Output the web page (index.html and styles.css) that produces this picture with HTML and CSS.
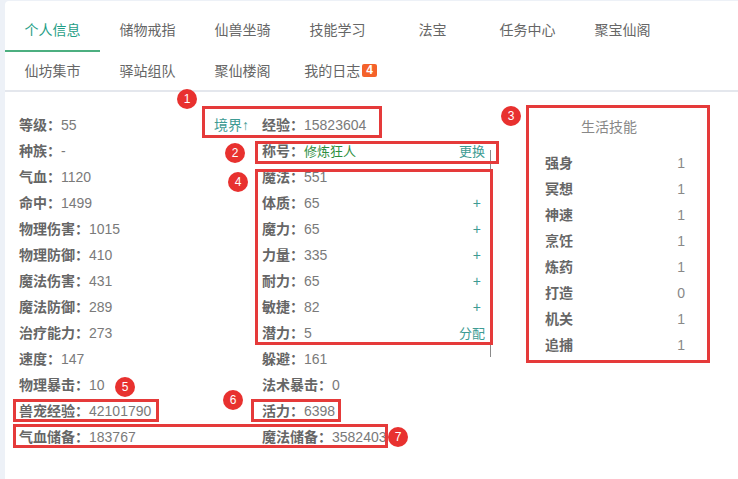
FILE: index.html
```html
<!DOCTYPE html>
<html lang="zh-CN">
<head>
<meta charset="utf-8">
<title>个人信息</title>
<link rel="stylesheet" href="styles.css">
</head>
<body>
<div class="page">
  <div class="card">
    <nav class="tabs">
      <div class="tab-row first">
        <div class="tab active">个人信息</div>
        <div class="tab">储物戒指</div>
        <div class="tab">仙兽坐骑</div>
        <div class="tab">技能学习</div>
        <div class="tab">法宝</div>
        <div class="tab">任务中心</div>
        <div class="tab">聚宝仙阁</div>
      </div>
      <div class="tab-row second">
        <div class="tab">仙坊集市</div>
        <div class="tab">驿站组队</div>
        <div class="tab">聚仙楼阁</div>
        <div class="tab with-badge">我的日志<span class="badge">4</span></div>
      </div>
    </nav>

    <div class="content">
      <div class="col col-left">
        <div class="row"><span class="lbl">等级：</span><span class="val">55</span><span class="link realm">境界↑</span></div>
        <div class="row"><span class="lbl">种族：</span><span class="val">-</span></div>
        <div class="row"><span class="lbl">气血：</span><span class="val">1120</span></div>
        <div class="row"><span class="lbl">命中：</span><span class="val">1499</span></div>
        <div class="row"><span class="lbl">物理伤害：</span><span class="val">1015</span></div>
        <div class="row"><span class="lbl">物理防御：</span><span class="val">410</span></div>
        <div class="row"><span class="lbl">魔法伤害：</span><span class="val">431</span></div>
        <div class="row"><span class="lbl">魔法防御：</span><span class="val">289</span></div>
        <div class="row"><span class="lbl">治疗能力：</span><span class="val">273</span></div>
        <div class="row"><span class="lbl">速度：</span><span class="val">147</span></div>
        <div class="row"><span class="lbl">物理暴击：</span><span class="val">10</span></div>
        <div class="row"><span class="lbl">兽宠经验：</span><span class="val">42101790</span></div>
        <div class="row"><span class="lbl">气血储备：</span><span class="val">183767</span></div>
      </div>

      <div class="col col-mid">
        <div class="row"><span class="lbl">经验：</span><span class="val">15823604</span></div>
        <div class="row"><span class="lbl">称号：</span><span class="title-val">修炼狂人</span><span class="link act small">更换</span></div>
        <div class="row"><span class="lbl">魔法：</span><span class="val">551</span></div>
        <div class="row"><span class="lbl">体质：</span><span class="val">65</span><span class="link act plus">+</span></div>
        <div class="row"><span class="lbl">魔力：</span><span class="val">65</span><span class="link act plus">+</span></div>
        <div class="row"><span class="lbl">力量：</span><span class="val">335</span><span class="link act plus">+</span></div>
        <div class="row"><span class="lbl">耐力：</span><span class="val">65</span><span class="link act plus">+</span></div>
        <div class="row"><span class="lbl">敏捷：</span><span class="val">82</span><span class="link act plus">+</span></div>
        <div class="row"><span class="lbl">潜力：</span><span class="val">5</span><span class="link act small">分配</span></div>
        <div class="row"><span class="lbl">躲避：</span><span class="val">161</span></div>
        <div class="row"><span class="lbl">法术暴击：</span><span class="val">0</span></div>
        <div class="row"><span class="lbl">活力：</span><span class="val">6398</span></div>
        <div class="row"><span class="lbl">魔法储备：</span><span class="val">3582403</span></div>
      </div>

      <div class="col col-right">
        <div class="skill-title">生活技能</div>
        <div class="skill-row"><span class="lbl">强身</span><span class="sval">1</span></div>
        <div class="skill-row"><span class="lbl">冥想</span><span class="sval">1</span></div>
        <div class="skill-row"><span class="lbl">神速</span><span class="sval">1</span></div>
        <div class="skill-row"><span class="lbl">烹饪</span><span class="sval">1</span></div>
        <div class="skill-row"><span class="lbl">炼药</span><span class="sval">1</span></div>
        <div class="skill-row"><span class="lbl">打造</span><span class="sval">0</span></div>
        <div class="skill-row"><span class="lbl">机关</span><span class="sval">1</span></div>
        <div class="skill-row"><span class="lbl">追捕</span><span class="sval">1</span></div>
      </div>
    </div>
  </div>

  <div class="mark m1"></div>
  <div class="mark m2"></div>
  <div class="mark m3"></div>
  <div class="mark m4"></div>
  <div class="mark m5"></div>
  <div class="mark m6"></div>
  <div class="mark m7"></div>

  <div class="dot d1">1</div>
  <div class="dot d2">2</div>
  <div class="dot d3">3</div>
  <div class="dot d4">4</div>
  <div class="dot d5">5</div>
  <div class="dot d6">6</div>
  <div class="dot d7">7</div>
</div>
</body>
</html>
```

FILE: styles.css
```css
html, body {
  margin: 0;
  height: 100%;
}

body {
  background: #edf1f7;
  font-family: "Liberation Sans", "Noto Sans CJK SC", sans-serif;
  font-size: 14px;
  color: #666;
  overflow: hidden;
}

.page {
  position: relative;
  width: 738px;
  height: 479px;
  box-sizing: border-box;
  padding: 1px 0 0 5px;
}

.card {
  width: 760px;
  height: 500px;
  background: #fff;
  border-radius: 4px;
}

/* Tabs */
.tabs {
  padding-top: 10px;
  border-bottom: 2px solid #e4e7ed;
}

.tab-row {
  display: flex;
}

.tab {
  flex: none;
  width: 95px;
  text-align: center;
  color: #666;
  box-sizing: border-box;
  white-space: nowrap;
}

.tab-row.first .tab {
  height: 41px;
  line-height: 39px;
}

.tab-row.second .tab {
  height: 38px;
  line-height: 38px;
}

.tab.active {
  color: #1f9e86;
  border-bottom: 2px solid #4caf80;
}

.tab.with-badge {
  padding-left: 6px;
}

.badge {
  display: inline-block;
  margin-left: 2px;
  padding: 0 4px;
  height: 13px;
  line-height: 13px;
  font-size: 12px;
  font-weight: 700;
  color: #fff;
  background: #f4622a;
  border-radius: 2px;
  vertical-align: 2px;
}

/* Content */
.content {
  display: flex;
  padding: 20px 0 0 14px;
}

.col-left {
  width: 243px;
}

.col-mid {
  width: 228px;
  position: relative;
}

.col-mid::after {
  content: "";
  position: absolute;
  left: 228px;
  top: 38px;
  width: 1px;
  height: 207px;
  background: #8a8a8a;
}

.row {
  display: flex;
  align-items: baseline;
  height: 26px;
  line-height: 26px;
  white-space: nowrap;
}

.lbl {
  font-weight: 700;
  color: #666;
}

.val {
  color: #7a7a7a;
}

.title-val {
  color: #2f8f3f;
  font-size: 13px;
}

.link {
  color: #3d9b93;
}

.realm {
  margin-left: auto;
  margin-right: 13px;
}

.act {
  margin-left: auto;
  padding-right: 5px;
}

.act.small {
  font-size: 13px;
}

.act.plus {
  padding-right: 9px;
}

.col-right {
  width: 184px;
  margin-left: 36px;
  box-sizing: border-box;
  padding: 0 25px 0 19px;
}

.skill-title {
  line-height: 26px;
  margin: 2px 0 10px;
  text-align: center;
  padding-right: 12px;
  color: #888;
}

.skill-row {
  display: flex;
  justify-content: space-between;
  height: 26px;
  line-height: 26px;
}

.sval {
  color: #888;
}

/* Annotation overlays */
.mark {
  position: absolute;
  box-sizing: border-box;
  border: 3px solid #e53a3a;
}

.m1 { left: 202px; top: 106px; width: 180px; height: 32px; }
.m2 { left: 255px; top: 141px; width: 244px; height: 23px; }
.m3 { left: 526px; top: 105px; width: 184px; height: 258px; }
.m4 { left: 255px; top: 169px; width: 238px; height: 176px; }
.m5 { left: 13px; top: 399px; width: 146px; height: 23px; }
.m6 { left: 251px; top: 399px; width: 90px; height: 23px; }
.m7 { left: 13px; top: 424px; width: 375px; height: 24px; }

.dot {
  position: absolute;
  width: 20px;
  height: 20px;
  border-radius: 50%;
  background: #e8312f;
  color: #fff;
  font-size: 12px;
  line-height: 20px;
  text-align: center;
}

.d1 { left: 177px; top: 89px; }
.d2 { left: 225px; top: 143px; }
.d3 { left: 501px; top: 106px; }
.d4 { left: 228px; top: 172px; }
.d5 { left: 115px; top: 377px; }
.d6 { left: 223px; top: 390px; }
.d7 { left: 388px; top: 427px; }
```
